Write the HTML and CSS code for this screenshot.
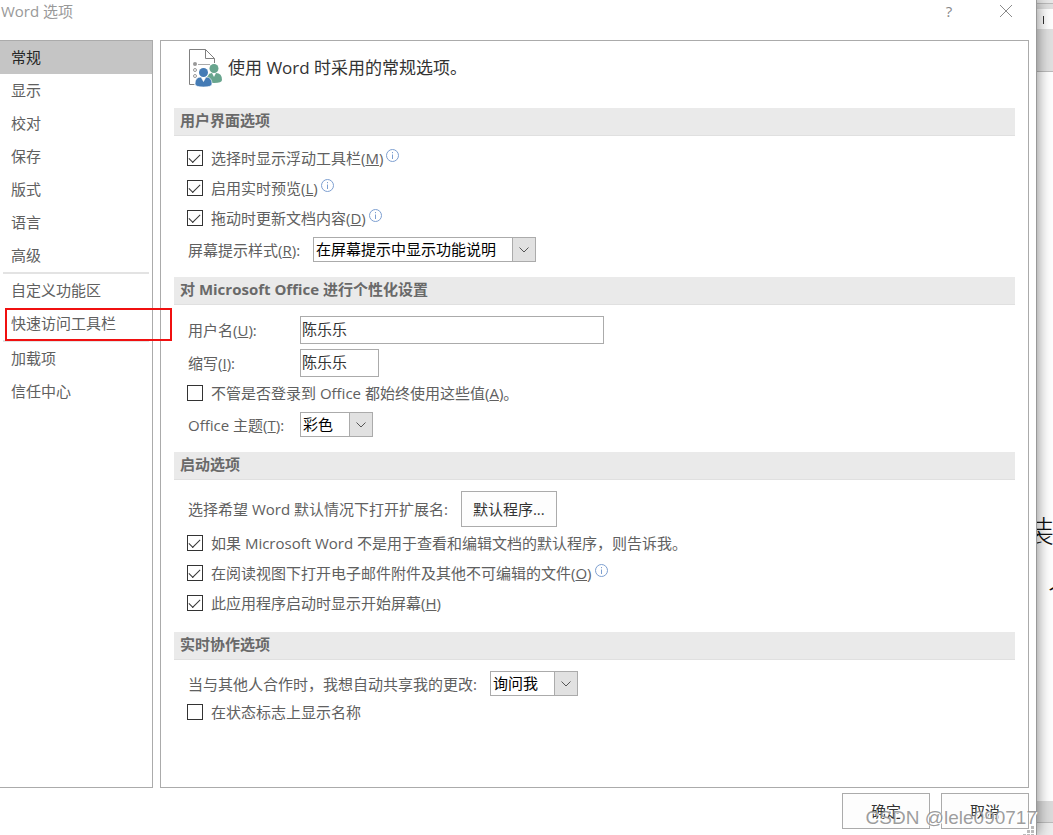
FILE: index.html
```html
<!DOCTYPE html>
<html lang="zh-CN">
<head>
    <meta charset="UTF-8">
    <title>Word 选项</title>
    <link rel="stylesheet" href="styles.css">
</head>
<body>
    <form class="dialog">
        <header class="titlebar">
            <span class="title">Word 选项</span>
            <button type="button" class="help" aria-label="帮助">?</button>
            <button type="button" class="close" aria-label="关闭">
                <svg width="14" height="14" viewBox="0 0 14 14"><path d="M1 1l12 12M13 1L1 13" stroke="#8a8a8a" fill="none"/></svg>
            </button>
        </header>
        <div class="content">
            <nav>
                <a href="#general" class="active">常规</a>
                <a href="#display">显示</a>
                <a href="#proofing">校对</a>
                <a href="#save">保存</a>
                <a href="#layout">版式</a>
                <a href="#language">语言</a>
                <a href="#advanced">高级</a>
                <hr>
                <a href="#ribbon">自定义功能区</a>
                <a href="#quick" class="marked">快速访问工具栏</a>
                <hr>
                <a href="#addins">加载项</a>
                <a href="#trust">信任中心</a>
            </nav>
            <main id="general">
                <h1>
                    <svg width="34" height="40" viewBox="0 0 34 40">
                        <path d="M5.500 36.500H.5V1.500H16.500L25.500 10.500V15M16.500 1.500V10.500H25.500" fill="none" stroke="#808080"/>
                        <circle cx="6" cy="16" r="2" fill="#999"/>
                        <path d="M9 16.500h12" stroke="#aaa"/>
                        <circle cx="6" cy="22" r="1.500" fill="none" stroke="#999"/>
                        <circle cx="6" cy="28" r="1.500" fill="none" stroke="#999"/>
                        <circle cx="25" cy="20.500" r="4.500" fill="#68a58e"/>
                        <path d="M18 28q2-3 5-3l2 4 2-4q6 0 6 7 0 3-8 3-5 0-7-3z" fill="#68a58e"/>
                        <circle cx="14.500" cy="24.500" r="5.500" fill="#fff"/>
                        <circle cx="14.500" cy="24.500" r="4.500" fill="#447bb5"/>
                        <path d="M6 36q0-7 6-7l2.500 4.500L17 29q6 0 6 7 0 3-8.500 3T6 36z" fill="#447bb5" stroke="#fff" stroke-width=".6"/>
                    </svg>
                    使用 Word 时采用的常规选项。
                </h1>

                <h2>用户界面选项</h2>
                <section>
                    <div class="check">
                        <input type="checkbox" id="minibar" checked>
                        <label for="minibar">选择时显示浮动工具栏(<u>M</u>)</label>
                        <svg class="info" viewBox="0 0 13 13"><circle cx="6.500" cy="6.500" r="6"/><path d="M6.500 5.500V10M6.500 3v1.200"/></svg>
                    </div>
                    <div class="check">
                        <input type="checkbox" id="preview" checked>
                        <label for="preview">启用实时预览(<u>L</u>)</label>
                        <svg class="info" viewBox="0 0 13 13"><circle cx="6.500" cy="6.500" r="6"/><path d="M6.500 5.500V10M6.500 3v1.200"/></svg>
                    </div>
                    <div class="check">
                        <input type="checkbox" id="drag" checked>
                        <label for="drag">拖动时更新文档内容(<u>D</u>)</label>
                        <svg class="info" viewBox="0 0 13 13"><circle cx="6.500" cy="6.500" r="6"/><path d="M6.500 5.500V10M6.500 3v1.200"/></svg>
                    </div>
                    <div class="field">
                        <label for="tips">屏幕提示样式(<u>R</u>):</label>
                        <div class="select wide">
                            <select id="tips"><option>在屏幕提示中显示功能说明</option></select>
                            <svg viewBox="0 0 22 23"><path d="M6.500 9.500l4.500 4.500 4.500-4.500"/></svg>
                        </div>
                    </div>
                </section>

                <h2>对 Microsoft Office 进行个性化设置</h2>
                <section>
                    <div class="field named">
                        <label for="username">用户名(<u>U</u>):</label>
                        <input type="text" id="username" class="username" value="陈乐乐">
                    </div>
                    <div class="field named">
                        <label for="initials">缩写(<u>I</u>):</label>
                        <input type="text" id="initials" class="initials" value="陈乐乐">
                    </div>
                    <div class="check">
                        <input type="checkbox" id="always">
                        <label for="always">不管是否登录到 Office 都始终使用这些值(<u>A</u>)。</label>
                    </div>
                    <div class="field named">
                        <label for="theme">Office 主题(<u>T</u>):</label>
                        <div class="select narrow">
                            <select id="theme"><option>彩色</option></select>
                            <svg viewBox="0 0 22 23"><path d="M6.500 9.500l4.500 4.500 4.500-4.500"/></svg>
                        </div>
                    </div>
                </section>

                <h2>启动选项</h2>
                <section>
                    <div class="field">
                        <label for="defaults">选择希望 Word 默认情况下打开扩展名:</label>
                        <button type="button" id="defaults" class="btn">默认程序...</button>
                    </div>
                    <div class="check">
                        <input type="checkbox" id="tellme" checked>
                        <label for="tellme">如果 Microsoft Word 不是用于查看和编辑文档的默认程序，则告诉我。</label>
                    </div>
                    <div class="check">
                        <input type="checkbox" id="reading" checked>
                        <label for="reading">在阅读视图下打开电子邮件附件及其他不可编辑的文件(<u>O</u>)</label>
                        <svg class="info" viewBox="0 0 13 13"><circle cx="6.500" cy="6.500" r="6"/><path d="M6.500 5.500V10M6.500 3v1.200"/></svg>
                    </div>
                    <div class="check">
                        <input type="checkbox" id="start" checked>
                        <label for="start">此应用程序启动时显示开始屏幕(<u>H</u>)</label>
                    </div>
                </section>

                <h2>实时协作选项</h2>
                <section>
                    <div class="field">
                        <label for="share">当与其他人合作时，我想自动共享我的更改:</label>
                        <div class="select medium">
                            <select id="share"><option>询问我</option></select>
                            <svg viewBox="0 0 22 23"><path d="M6.500 9.500l4.500 4.500 4.500-4.500"/></svg>
                        </div>
                    </div>
                    <div class="check">
                        <input type="checkbox" id="names">
                        <label for="names">在状态标志上显示名称</label>
                    </div>
                </section>
            </main>
        </div>
        <footer>
            <button type="submit" class="btn">确定</button>
            <button type="button" class="btn">取消</button>
        </footer>
        <svg class="grip" width="11" height="9" viewBox="0 0 11 9"><path d="M8 0h3v3H8zM4 4h3v3H4zM8 4h3v3H8zM0 8h3v1H0zM4 8h3v1H4zM8 8h3v1H8z" fill="#bbb"/></svg>
    </form>

    <!-- document window showing behind the dialog -->
    <div class="behind">
        <div class="ribbon"></div>
        <div class="ruler"></div>
        <div class="band"></div>
        <div class="paper">
            <span class="glyph">装</span>
            <span class="glyph second">个</span>
        </div>
        <div class="scroll"></div>
        <div class="status"></div>
    </div>
    <div class="watermark">CSDN @lele090717</div>
</body>
</html>
```
FILE: styles.css
```css
*, *::before, *::after {
    box-sizing: border-box;
}
body {
    margin: 0;
    display: flex;
    position: relative;
    min-height: 100vh;
    overflow: hidden;
    background: white;
    color: #606060;
    font: 15px/22px "Open Sans", "Noto Sans CJK SC", sans-serif;
}
input, select, button {
    font: inherit;
    color: #333;
    margin: 0;
}
.dialog {
    position: relative;
    z-index: 1;
    flex: 1;
    display: flex;
    flex-direction: column;
    padding-right: 7px;
    background: white;
    border-right: 1px solid #999;
    box-shadow: 0 0 14px rgba(0, 0, 0, 0.5);
}
.titlebar {
    display: flex;
    height: 40px;
    padding: 0 16px 0 1px;
    color: #999;
}
.title {
    flex: 1;
}
.titlebar button {
    height: 22px;
    padding: 0;
    border: none;
    background: none;
    color: #888;
}
.help {
    width: 14px;
    margin-right: 43px;
}
.close {
    width: 14px;
}
.close svg {
    display: block;
    margin: auto;
}
.content {
    flex: 1;
    display: grid;
    grid-template-columns: 153px 1fr;
    gap: 7px;
}
nav {
    border: 1px solid #ababab;
    border-left: none;
}
nav a {
    display: block;
    position: relative;
    padding-left: 11px;
    line-height: 33px;
    color: #606060;
    text-decoration: none;
}
nav a.active {
    background: #c5c5c5;
    color: #262626;
}
nav hr {
    height: 2px;
    margin: 0 3px;
    border: none;
    background: #e3e3e3;
}
.marked::after {
    content: "";
    position: absolute;
    z-index: 1;
    top: 1px;
    left: 5px;
    width: 167px;
    height: 33px;
    border: 2px solid #f01010;
}
main {
    padding: 0 13px;
    border: 1px solid #ababab;
}
h1 {
    display: flex;
    align-items: center;
    gap: 5px;
    height: 54px;
    margin: 0 0 13px 15px;
    font-size: 17px;
    font-weight: normal;
    color: #333;
}
h2 {
    margin: 0;
    height: 28px;
    padding-left: 6px;
    border-bottom: 1px solid #e0e0e0;
    background: #eaeaea;
    font-size: 15px;
    line-height: 24px;
    color: #696969;
}
section {
    padding: 11px 13px 10px;
}
.check {
    display: flex;
    align-items: center;
    margin-bottom: 8px;
}
.check label {
    margin-left: 8px;
}
input[type="checkbox"] {
    appearance: none;
    width: 16px;
    height: 16px;
    border: 1px solid #333;
    background: white;
}
input[type="checkbox"]:checked::before {
    content: "";
    display: block;
    width: 11px;
    height: 6px;
    margin: 3px 1px;
    border: solid #333;
    border-width: 0 0 1px 1px;
    transform: rotate(-45deg);
}
.info {
    width: 13px;
    height: 13px;
    margin: 0 0 6px 3px;
    fill: none;
    stroke: #7d9fd0;
}
.field {
    display: flex;
    align-items: center;
    gap: 13px;
    margin-bottom: 5px;
    padding-left: 1px;
}
.named {
    gap: 0;
}
.named label {
    width: 112px;
}
input[type="text"] {
    height: 28px;
    padding: 0 1px 4px;
    border: 1px solid #ababab;
}
.username {
    width: 304px;
}
.initials {
    width: 79px;
}
.select {
    position: relative;
    height: 25px;
}
.select select {
    appearance: none;
    width: 100%;
    height: 25px;
    padding: 0 23px 2px 2px;
    border: 1px solid #ababab;
    border-radius: 0;
    background: white;
    color: black;
}
.select svg {
    position: absolute;
    top: 0;
    right: 0;
    width: 24px;
    height: 25px;
    border: 1px solid #ababab;
    background: #e1e1e1;
    fill: none;
    stroke: #555;
    pointer-events: none;
}
.wide {
    width: 223px;
}
.medium {
    width: 88px;
}
.narrow {
    width: 73px;
}
.btn {
    height: 36px;
    padding: 0 11px;
    border: 1px solid #ababab;
    background: #fdfdfd;
}
footer {
    display: flex;
    justify-content: flex-end;
    gap: 11px;
    padding: 5px 0 6px;
}
footer .btn {
    width: 88px;
}
.grip {
    position: absolute;
    right: 2px;
    bottom: 0;
}

.behind {
    display: flex;
    flex-direction: column;
    width: 16px;
    background: white;
}
.ribbon {
    height: 9px;
    border-top: 3px solid #e8e8e8;
    background: #e0e0e0;
    box-shadow: inset 0 1px #bbb;
}
.ruler {
    height: 20px;
    padding: 7px 0 5px 6px;
}
.ruler::before {
    content: "";
    display: block;
    width: 1px;
    height: 8px;
    background: #333;
}
.band {
    height: 43px;
    border-bottom: 1px solid #bbb;
    background: #e1e1e1;
}
.paper {
    position: relative;
    flex: 1;
    overflow: hidden;
}
.glyph {
    position: absolute;
    top: 444px;
    left: -13px;
    font-size: 30px;
    font-weight: 300;
    line-height: 30px;
    color: #111;
}
.second {
    top: 504px;
    left: 11px;
}
.scroll {
    height: 22px;
    border-bottom: 1px solid #bbb;
    background: #dcdcdc;
}
.status {
    height: 12px;
    background: #eee;
}
.watermark {
    position: absolute;
    z-index: 2;
    right: 16px;
    bottom: 6px;
    font: 19px/22px "Liberation Sans", sans-serif;
    color: rgba(140, 140, 140, 0.85);
    text-shadow: 1px 1px white;
    pointer-events: none;
}
```
